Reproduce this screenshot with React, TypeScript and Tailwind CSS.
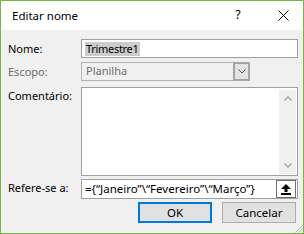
export default function App() {
  return (
    <div className="w-[304px] h-[234px] flex flex-col border border-[#76b640] bg-[#f0f0f0] text-[11px] text-black font-['Noto_Sans',sans-serif] overflow-hidden">
      {/* title bar */}
      <div className="h-[29px] shrink-0 bg-white flex items-center pl-[11px] pr-[14px]">
        <span className="text-[11.5px] flex-1">Editar nome</span>
        <span className="w-[12px] text-center text-[12.5px] mr-[34px]">?</span>
        <svg width="11" height="11" viewBox="0 0 11 11" className="stroke-black" fill="none">
          <path d="M0.5 0.5 L10.5 10.5 M10.5 0.5 L0.5 10.5" strokeWidth="1" />
        </svg>
      </div>

      <div className="flex-1 flex flex-col pt-[9px] pl-[7px] pr-[5px] relative">
        {/* Nome */}
        <div className="flex h-[19px]">
          <label className="w-[73px] leading-[19px]">Nome:</label>
          <div className="flex-1 bg-white border border-[#a0a0a0] flex items-center pl-[3px]">
            <span className="bg-[#cccccc] leading-[14px] px-[1px] tracking-[-0.3px]">Trimestre1</span>
          </div>
        </div>

        {/* Escopo */}
        <div className="flex h-[19px] mt-[4px]">
          <label className="w-[73px] leading-[19px] text-[#6d6d6d]">Escopo:</label>
          <div className="w-[169px] border border-[#b4b4b4] bg-[#f0f0f0] flex items-center">
            <span className="flex-1 pl-[4px] text-[#6d6d6d]">Planilha</span>
            <div className="w-[17px] h-[19px] -mr-px -mt-px border-2 border-[#a5a5a5] bg-[#e3e3e3] flex items-center justify-center">
              <svg width="8" height="5" viewBox="0 0 8 5" fill="none" className="stroke-[#555]">
                <path d="M0.5 0.5 L4 4 L7.5 0.5" strokeWidth="1" />
              </svg>
            </div>
          </div>
        </div>

        {/* Comentário */}
        <div className="flex h-[89px] mt-[6px]">
          <label className="w-[73px] pt-[1px]">Comentário:</label>
          <div className="flex-1 bg-white border border-[#a0a0a0] flex justify-end">
            <div className="w-[17px] bg-[#f0f0f0] flex flex-col justify-between items-center py-[6px] mt-[2px] mb-[1px] mr-[1px]">
              <svg width="8" height="5" viewBox="0 0 8 5" fill="none" className="stroke-[#a3a3a3]">
                <path d="M0.5 4.5 L4 1 L7.5 4.5" strokeWidth="1.3" />
              </svg>
              <svg width="8" height="5" viewBox="0 0 8 5" fill="none" className="stroke-[#a3a3a3]">
                <path d="M0.5 0.5 L4 4 L7.5 0.5" strokeWidth="1.3" />
              </svg>
            </div>
          </div>
        </div>

        {/* Refere-se a */}
        <div className="flex h-[20px] mt-[3px]">
          <label className="w-[73px] leading-[18px]">Refere-se a:</label>
          <div className="flex-1 bg-white border border-[#a0a0a0] flex items-center">
            <span className="flex-1 pl-[3px] text-[11.5px] whitespace-nowrap overflow-hidden">{"={“Janeiro”\\“Fevereiro”\\“Março”}"}</span>
            <div className="w-[20px] h-[18px] mr-[1px] border border-[#707070] bg-white flex items-center justify-center">
              <svg width="10" height="11" viewBox="0 0 10 11" className="fill-black">
                <path d="M5 0 L10 5 L6.5 5 L6.5 8 L3.5 8 L3.5 5 L0 5 Z" />
                <rect x="0" y="9" width="10" height="2" />
              </svg>
            </div>
          </div>
        </div>

        {/* buttons */}
        <div className="flex justify-end gap-[10px] mt-[3px] pr-[2px]">
          <button className="w-[74px] h-[21px] border-2 border-[#0078d7] bg-[#e1e1e1] text-[11.5px]">OK</button>
          <button className="w-[74px] h-[21px] border border-[#adadad] bg-[#e1e1e1] text-[11.5px]">Cancelar</button>
        </div>

        <svg width="10" height="10" viewBox="0 0 10 10" className="absolute right-0 bottom-0 stroke-[#b8b8b8]" fill="none">
          <path d="M9.5 2.5 L2.5 9.5 M9.5 5.5 L5.5 9.5 M9.5 8.5 L8.5 9.5" strokeWidth="1" />
        </svg>
      </div>
    </div>
  )
}
